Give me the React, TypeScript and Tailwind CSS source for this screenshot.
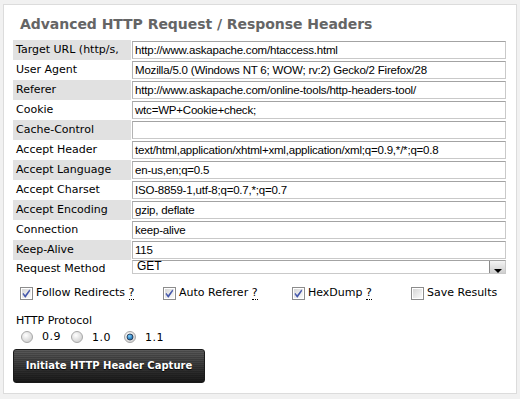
import React from "react";

const rows: { label: string; value: string }[] = [
  { label: "Target URL (http/s,", value: "http://www.askapache.com/htaccess.html" },
  { label: "User Agent", value: "Mozilla/5.0 (Windows NT 6; WOW; rv:2) Gecko/2 Firefox/28" },
  { label: "Referer", value: "http://www.askapache.com/online-tools/http-headers-tool/" },
  { label: "Cookie", value: "wtc=WP+Cookie+check;" },
  { label: "Cache-Control", value: "" },
  { label: "Accept Header", value: "text/html,application/xhtml+xml,application/xml;q=0.9,*/*;q=0.8" },
  { label: "Accept Language", value: "en-us,en;q=0.5" },
  { label: "Accept Charset", value: "ISO-8859-1,utf-8;q=0.7,*;q=0.7" },
  { label: "Accept Encoding", value: "gzip, deflate" },
  { label: "Connection", value: "keep-alive" },
  { label: "Keep-Alive", value: "115" },
];

function Check({ checked }: { checked: boolean }) {
  return (
    <svg width="13" height="13" viewBox="0 0 13 13" className="shrink-0">
      <defs>
        <linearGradient id={checked ? "cg1" : "cg0"} x1="0" y1="0" x2="1" y2="1">
          <stop offset="0" stopColor="#d6d6d6" />
          <stop offset="1" stopColor="#fbfbfb" />
        </linearGradient>
      </defs>
      <rect x="0.5" y="0.5" width="12" height="12" fill="#fff" stroke="#8c8c8c" />
      <rect x="2" y="2" width="9" height="9" fill={`url(#${checked ? "cg1" : "cg0"})`} />
      {checked && (
        <path d="M3.2 6.2 L5.2 8.6 L9.6 2.8 L9.6 4.2 L5.3 10.4 L3.2 7.6 Z" fill="#3b4fa8" stroke="#3b4fa8" strokeWidth="0.6" />
      )}
    </svg>
  );
}

function Radio({ checked }: { checked: boolean }) {
  return (
    <svg width="12" height="12" viewBox="0 0 12 12" className="shrink-0">
      <defs>
        <radialGradient id="rg" cx="0.4" cy="0.35" r="0.7">
          <stop offset="0" stopColor="#ffffff" />
          <stop offset="1" stopColor="#cdcdcd" />
        </radialGradient>
        <radialGradient id="rb" cx="0.4" cy="0.35" r="0.7">
          <stop offset="0" stopColor="#7fd0ff" />
          <stop offset="1" stopColor="#0a5a9c" />
        </radialGradient>
      </defs>
      <circle cx="6" cy="6" r="5.5" fill="url(#rg)" stroke="#a8a8a8" />
      {checked && <circle cx="6" cy="6" r="3" fill="url(#rb)" stroke="#1d2f4a" strokeWidth="0.8" />}
    </svg>
  );
}

export default function App() {
  return (
    <div className="w-[520px] h-[399px] bg-[#f1f1f1] pt-[4px] pl-[3px] font-['DejaVu_Sans',Verdana,sans-serif] text-[11px] text-black">
      <div className="w-[514px] h-[390px] bg-white border border-[#dcdcdc] pl-[9px] pr-[9px]">
        <h1 className="h-[35px] pl-[7px] pt-[9px] text-[14px] font-bold text-[#656565] leading-[20px] tracking-[-0.05px]">
          Advanced HTTP Request / Response Headers
        </h1>
        <div className="flex flex-col">
          {rows.map((r, i) => (
            <div key={r.label} className="flex h-[20px]">
              <div
                className={`w-[118px] shrink-0 pl-[3px] leading-[20px] whitespace-nowrap overflow-hidden ${
                  i % 2 === 0 ? "bg-[#e1e1e1]" : "bg-white"
                }`}
              >
                {r.label}
              </div>
              <div className="ml-[1px] w-[374px] py-[1px]">
                <div className="h-[18px] border border-[#c9c9c9] border-t-[#a3a3a3] border-l-[#b3b3b3] bg-white pl-[2px] leading-[16px] font-['Liberation_Sans',Arial,sans-serif] text-[11.5px] whitespace-nowrap overflow-hidden tracking-[-0.2px]">
                  {r.value}
                </div>
              </div>
            </div>
          ))}
          <div className="flex h-[20px]">
            <div className="w-[118px] shrink-0 pl-[3px] leading-[18px]">Request Method</div>
            <div className="ml-[1px] w-[374px]">
              <div className="flex h-[14px] border border-[#c9c9c9] border-t-[#a3a3a3] bg-white">
                <span className="flex-1 pl-[4px] leading-[11px] font-['Liberation_Sans',Arial,sans-serif] text-[12px]">GET</span>
                <span className="w-[16px] h-[12px] border-l border-[#8a8a8a] bg-[linear-gradient(#f4f4f4,#cfcfcf)] flex items-end justify-center">
                  <span className="w-0 h-0 border-l-[4px] border-r-[4px] border-t-[4px] border-l-transparent border-r-transparent border-t-black" />
                </span>
              </div>
            </div>
          </div>
        </div>
        <div className="flex items-center h-[26px] pl-[7px]">
          <label className="flex items-center gap-[3px] w-[143px]">
            <Check checked />
            <span>
              Follow Redirects <abbr className="no-underline border-b border-dotted border-black">?</abbr>
            </span>
          </label>
          <label className="flex items-center gap-[3px] w-[129px]">
            <Check checked />
            <span>
              Auto Referer <abbr className="no-underline border-b border-dotted border-black">?</abbr>
            </span>
          </label>
          <label className="flex items-center gap-[3px] w-[119px]">
            <Check checked />
            <span>
              HexDump <abbr className="no-underline border-b border-dotted border-black">?</abbr>
            </span>
          </label>
          <label className="flex items-center gap-[3px]">
            <Check checked={false} />
            <span>Save Results</span>
          </label>
        </div>
        <div className="pl-[3px] pt-[8px] leading-[14px]">HTTP Protocol</div>
        <div className="flex items-center h-[18px] pl-[8px]">
          <Radio checked={false} />
          <span className="ml-[9px] mr-[10px] tracking-[0.5px]">0.9</span>
          <Radio checked={false} />
          <span className="ml-[9px] mr-[13px] pt-[3px] tracking-[0.5px]">1.0</span>
          <Radio checked />
          <span className="ml-[9px] pt-[3px] tracking-[0.5px]">1.1</span>
        </div>
        <button className="relative mt-[3px] w-[192px] h-[34px] rounded-[3px] border border-[#1a1a1a] bg-[linear-gradient(#5a5a5a,#3c3c3c_45%,#272727_75%,#1b1b1b)] text-white font-bold text-[10px] leading-[32px] text-center [text-shadow:0_1px_1px_#000] overflow-hidden">
          <span className="absolute inset-0 bg-[repeating-linear-gradient(transparent_0px,transparent_1px,rgba(0,0,0,0.18)_1px,rgba(0,0,0,0.18)_2px)]" />
          <span className="relative">Initiate HTTP Header Capture</span>
        </button>
      </div>
    </div>
  );
}
